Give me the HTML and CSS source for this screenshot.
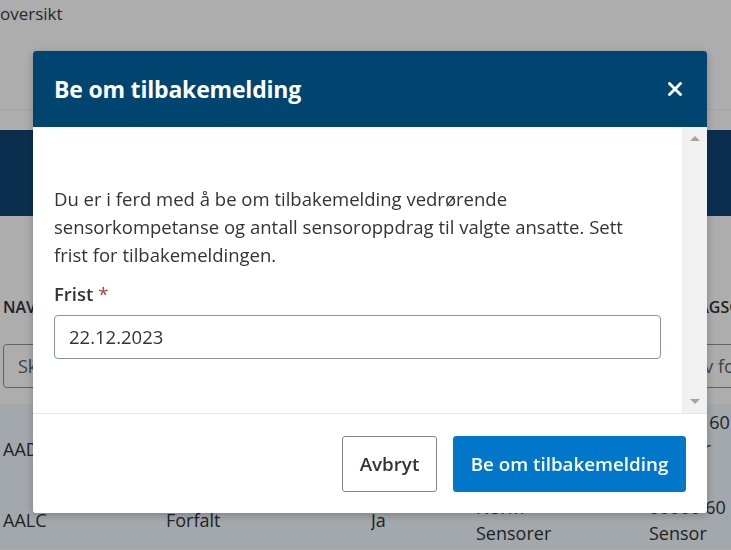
FILE: index.html
```html
<!DOCTYPE html>
<html lang="no">
<head>
<meta charset="utf-8">
<title>Be om tilbakemelding</title>
<link rel="stylesheet" href="styles.css">
</head>
<body>
<div class="page">
  <div class="topbar"><span class="crumb">oversikt</span></div>
  <div class="band"></div>
  <div class="table">
    <div class="thead">
      <div>NAVN</div><div>STATUS</div><div>SVAR</div><div>TYPE</div><div class="clip shift">OPPDRAGSGIVER</div>
    </div>
    <div class="filters">
      <div class="filter first">Skriv for å filtrere</div>
      <div class="filter wide">Skriv for å filtrere</div>
    </div>
    <div class="row r1">
      <div>AAD</div><div></div><div></div><div></div><div class="clip num">00000 60<br>Sensor</div>
    </div>
    <div class="row r2">
      <div>AALC</div><div>Forfalt</div><div>Ja</div><div>Norm<br>Sensorer</div><div class="clip num">00000 60<br>Sensor</div>
    </div>
  </div>
</div>
<div class="overlay"></div>
<div class="modal">
  <div class="modal-head">
    <h2 class="modal-title">Be om tilbakemelding</h2>
    <button class="close" aria-label="Lukk">
      <svg width="14" height="14" viewBox="0 0 14 14"><path d="M1.5 1.5 L12.5 12.5 M12.5 1.5 L1.5 12.5" stroke="#fff" stroke-width="2.8" stroke-linecap="square" fill="none"/></svg>
    </button>
  </div>
  <div class="modal-body">
    <div class="content">
      <p class="intro">Du er i ferd med å be om tilbakemelding vedrørende sensorkompetanse og antall sensoroppdrag til valgte ansatte. Sett frist for tilbakemeldingen.</p>
      <label class="label">Frist <span class="req">*</span></label>
      <div class="input">22.12.2023</div>
    </div>
    <div class="scrollbar">
      <span class="arrow up"></span>
      <span class="arrow down"></span>
    </div>
  </div>
  <div class="modal-foot">
    <button class="btn secondary">Avbryt</button>
    <button class="btn primary">Be om tilbakemelding</button>
  </div>
</div>
</body>
</html>
```
FILE: styles.css
```css
html, body {
  margin: 0;
  padding: 0;
  background: #ffffff;
  font-family: "Open Sans", "Liberation Sans", sans-serif;
  color: #333;
  overflow: hidden;
}
.page {
  width: 731px;
  height: 550px;
  overflow: hidden;
}
.topbar {
  height: 109px;
  border-bottom: 1px solid #f0f0f0;
  font-size: 17px;
  line-height: 28px;
  color: #3c3c3c;
}
.crumb { display: block; }
.band {
  margin-top: 20px;
  height: 86px;
  background: #124574;
}
.table {
  margin-top: 54px;
  font-size: 18px;
  color: #333;
}
.thead, .row {
  display: grid;
  grid-template-columns: 163px 205px 105px 173px 1fr;
  padding-left: 3px;
  white-space: nowrap;
}
.thead {
  font-size: 16px;
  font-weight: 600;
  line-height: 34px;
  padding-top: 20px;
  height: 54px;
  box-sizing: border-box;
}
.thead .shift { margin-left: -5px; }
.filters {
  display: flex;
  height: 44px;
  margin-top: 20px;
  padding-left: 3px;
  padding-bottom: 16px;
  overflow: hidden;
}
.filter {
  height: 44px;
  flex: none;
  box-sizing: border-box;
  border: 1px solid #8c939a;
  border-radius: 4px;
  line-height: 42px;
  padding-left: 14px;
  font-size: 18px;
  color: #5a656f;
  white-space: nowrap;
  overflow: hidden;
}
.filter.first { width: 150px; }
.filter.wide {
  margin-left: 505px;
  width: 200px;
}
.row {
  background: #f1f8ff;
  line-height: 26px;
  color: #333;
}
.row > div { overflow: hidden; }
.row .num { padding-left: 4px; }
.r1 { padding-top: 5px; height: 75px; box-sizing: border-box; }
.r1 > div:not(.clip) { padding-top: 27px; }
.r2 { padding-top: 15px; height: 70px; box-sizing: border-box; }
.r2 > div:not(:nth-child(4)):not(.clip) { padding-top: 13px; }
.r2 .num { padding-left: 0; }

.overlay {
  position: fixed;
  inset: 0;
  background: rgba(0, 0, 0, 0.32);
}
.modal {
  position: fixed;
  top: 51px;
  left: 33px;
  width: 674px;
  background: #fff;
  border-radius: 3px;
  overflow: hidden;
  box-shadow: 0 2px 8px rgba(0, 0, 0, 0.25);
}
.modal-head {
  height: 76px;
  background: #004470;
  display: flex;
  align-items: center;
  justify-content: space-between;
  padding: 0 25px 0 21px;
}
.modal-title {
  margin: 0;
  color: #fff;
  font-size: 23px;
  font-weight: 700;
  letter-spacing: -0.2px;
}
.close {
  background: none;
  border: 0;
  padding: 0;
  width: 14px;
  height: 14px;
  display: flex;
  cursor: pointer;
}
.modal-body {
  display: flex;
  height: 286px;
}
.content {
  flex: 1;
  padding: 58px 21px 0 21px;
}
.intro {
  margin: 0;
  font-size: 18.5px;
  line-height: 28px;
  color: #333;
}
.label {
  display: block;
  margin-top: 11px;
  font-size: 18.5px;
  line-height: 28px;
  font-weight: 600;
  color: #333;
}
.req { color: #b03a3a; font-weight: 400; }
.input {
  margin-top: 7px;
  height: 44px;
  box-sizing: border-box;
  border: 1px solid #8a939c;
  border-radius: 4px;
  padding-left: 14px;
  line-height: 42px;
  font-size: 18.5px;
  color: #333;
}
.scrollbar {
  width: 25px;
  background: #f1f1f1;
  display: flex;
  flex-direction: column;
  justify-content: space-between;
  align-items: center;
  padding: 9px 0 9px;
  box-sizing: border-box;
}
.arrow {
  width: 0;
  height: 0;
  border-left: 5px solid transparent;
  border-right: 5px solid transparent;
}
.arrow.up { border-bottom: 5px solid #a3a3a3; }
.arrow.down { border-top: 5px solid #a3a3a3; }
.modal-foot {
  border-top: 1px solid #e6e6e6;
  height: 99px;
  display: flex;
  justify-content: flex-end;
  align-items: center;
  gap: 16px;
  padding-right: 21px;
}
.btn {
  height: 56px;
  border-radius: 3px;
  font-family: "Open Sans", "Liberation Sans", sans-serif;
  font-size: 18.8px;
  font-weight: 600;
  padding: 0;
  cursor: pointer;
}
.btn.secondary {
  background: #fff;
  border: 1px solid #7d858d;
  color: #333;
  width: 95px;
}
.btn.primary {
  background: #0077c8;
  border: 1px solid #0077c8;
  color: #fff;
  width: 233px;
}
```
